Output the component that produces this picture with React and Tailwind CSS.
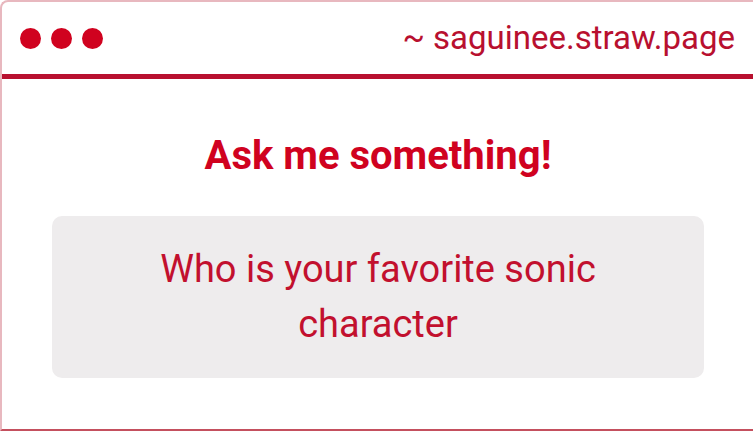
import React from 'react';

export default function App() {
  return (
    <div className="w-[753px] h-[431px] bg-white overflow-hidden" style={{ fontFamily: 'Roboto, "Liberation Sans", sans-serif' }}>
      <div className="h-full border-2 border-r-0 border-[#e8b8bf] border-b-[#c4505e] rounded-tl-lg flex flex-col">
        <div className="h-[72px] flex items-center justify-between pl-[18px] pr-[18px]">
          <div className="flex gap-[10px]">
            <span className="w-[21px] h-[21px] rounded-full bg-[#d0021f]" />
            <span className="w-[21px] h-[21px] rounded-full bg-[#d0021f]" />
            <span className="w-[21px] h-[21px] rounded-full bg-[#d0021f]" />
          </div>
          <div className="text-[33px] text-[#b8102f] leading-none pb-[2px]">~ saguinee.straw.page</div>
        </div>
        <div className="h-[5px] bg-[#b8102f]" />
        <div className="flex flex-col items-center pl-[50px] pr-[49px]">
          <h1 className="mt-[57px] text-[40px] font-bold text-[#d0021f] leading-none">Ask me something!</h1>
          <div className="mt-[40px] w-full h-[162px] bg-[#eeeced] rounded-[10px] flex items-center justify-center px-12">
            <p className="text-[38px] leading-[55px] text-[#c2102e] text-center">Who is your favorite sonic character</p>
          </div>
        </div>
      </div>
    </div>
  );
}
